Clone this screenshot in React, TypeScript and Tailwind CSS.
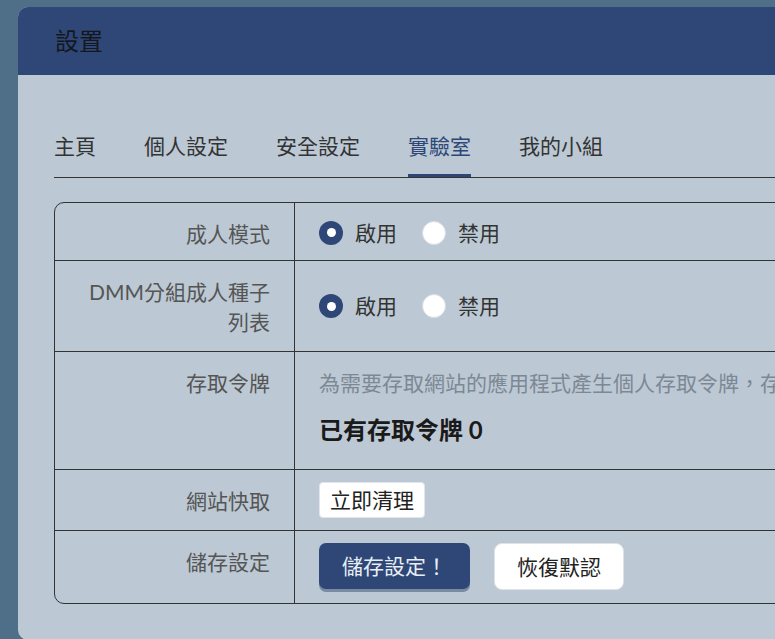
import React from "react";

const FONT = { fontFamily: 'Lato, "Noto Sans CJK TC", "Noto Sans", sans-serif' };

function Radio({ checked }: { checked: boolean }) {
  return checked ? (
    <span className="w-[24px] h-[24px] rounded-full bg-[#2e4777] flex items-center justify-center shrink-0">
      <span className="w-[9px] h-[9px] rounded-full bg-white" />
    </span>
  ) : (
    <span className="w-[24px] h-[24px] rounded-full bg-white border border-[#d8dde2] shrink-0" />
  );
}

function RadioGroup() {
  return (
    <div className="flex items-center">
      <Radio checked />
      <span className="ml-[12px] text-[#333] leading-[30px]">啟用</span>
      <span className="ml-[25px]" />
      <Radio checked={false} />
      <span className="ml-[12px] text-[#333] leading-[30px]">禁用</span>
    </div>
  );
}

function Row({
  label,
  children,
  last,
  rowClass,
  cellClass,
}: {
  label: React.ReactNode;
  children: React.ReactNode;
  last?: boolean;
  rowClass?: string;
  cellClass?: string;
}) {
  return (
    <div className={`grid grid-cols-[240px_1fr] ${last ? "" : "border-b border-[#333]"} ${rowClass ?? ""}`}>
      <div className="border-r border-[#333] text-right pr-[24px] pl-[20px] pt-[16px] leading-[30px] text-[#555]">
        {label}
      </div>
      <div className={`pl-[24px] ${cellClass ?? ""}`}>{children}</div>
    </div>
  );
}

export default function App() {
  const tabs = ["主頁", "個人設定", "安全設定", "實驗室", "我的小組"];
  return (
    <div
      className="w-full h-[639px] overflow-hidden bg-[#4f6e88] pt-[7px] pl-[18px] text-[21px]"
      style={FONT}
    >
      <div className="w-[900px] h-[633px] rounded-[10px] bg-[#bcc9d4] overflow-hidden">
        <div className="h-[68px] bg-[#2e4777] flex items-center pl-[37px] text-[24px] text-[#15171f]">
          設置
        </div>
        <div className="pl-[36px] pt-[56px]">
          <div className="flex border-b border-[#333]">
            {tabs.map((t) => {
              const active = t === "實驗室";
              return (
                <div
                  key={t}
                  className={`mr-[48px] pb-[13px] leading-[30px] border-b-[3px] ${
                    active ? "border-[#2e4777] text-[#2e4777]" : "border-transparent text-[#333]"
                  }`}
                >
                  {t}
                </div>
              );
            })}
          </div>

          <div className="mt-[24px] border border-[#333] rounded-l-[10px]">
            <Row label="成人模式" rowClass="h-[58px]" cellClass="flex items-center pt-[2px]">
              <RadioGroup />
            </Row>
            <Row
              label={
                <>
                  DMM分組成人種子
                  <br />
                  列表
                </>
              }
              rowClass="h-[91px]"
              cellClass="flex items-center"
            >
              <RadioGroup />
            </Row>
            <Row label="存取令牌" rowClass="h-[118px]" cellClass="pt-[16px] overflow-hidden">
              <div className="leading-[30px] text-[#7d8894] whitespace-nowrap">
                為需要存取網站的應用程式產生個人存取令牌，存取令牌可以代替密碼使用
              </div>
              <div className="mt-[17px] leading-[30px] text-[24px] font-bold text-[#1a1a1a]">
                已有存取令牌 0
              </div>
            </Row>
            <Row label="網站快取" rowClass="h-[61px]" cellClass="pt-[12px]">
              <button className="h-[36px] px-[10px] bg-white rounded-[4px] border border-[#e2e6ea] text-[#222] leading-[30px]">
                立即清理
              </button>
            </Row>
            <Row label="儲存設定" last rowClass="h-[72px]" cellClass="pt-[12px] flex items-start">
              <button className="h-[46px] px-[23px] bg-[#2e4777] rounded-[7px] text-[#e8eef5] shadow-[0_3px_0_#7a8aa0] leading-[30px]">
                儲存設定！
              </button>
              <button className="ml-[24px] h-[47px] px-[22px] bg-white rounded-[8px] border border-[#dfe3e7] text-[#222] leading-[30px]">
                恢復默認
              </button>
            </Row>
          </div>
        </div>
      </div>
    </div>
  );
}
